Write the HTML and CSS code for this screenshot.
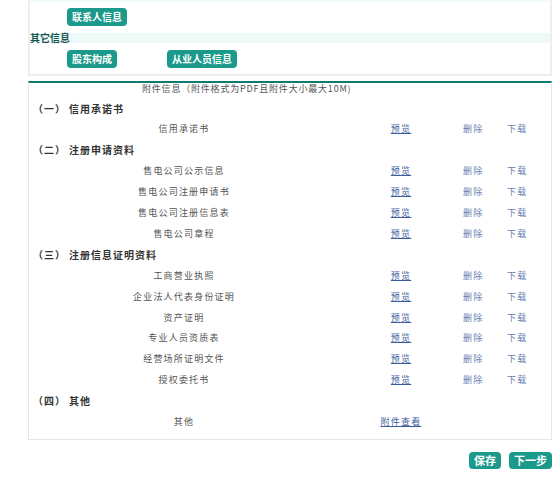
FILE: index.html
```html
<!DOCTYPE html>
<html lang="zh-CN">
<head>
  <meta charset="UTF-8">
  <title>附件信息</title>
  <link rel="stylesheet" href="styles.css">
</head>
<body>
  <div class="wrap">
    <section class="info-box">
      <div class="strip"></div>
      <div class="btn-row">
        <button type="button" class="btn">联系人信息</button>
      </div>
      <div class="box-title">其它信息</div>
      <div class="btn-row second">
        <button type="button" class="btn">股东构成</button>
        <button type="button" class="btn">从业人员信息</button>
      </div>
    </section>

    <section class="files">
      <div class="files-title">附件信息（附件格式为PDF且附件大小最大10M)</div>

      <div class="group">（一）<span>信用承诺书</span></div>
      <div class="file-row">
        <span class="name">信用承诺书</span>
        <a href="#" class="view">预览</a>
        <a href="#" class="op">删除</a>
        <a href="#" class="op">下载</a>
      </div>

      <div class="group">（二）<span>注册申请资料</span></div>
      <div class="file-row">
        <span class="name">售电公司公示信息</span>
        <a href="#" class="view">预览</a>
        <a href="#" class="op">删除</a>
        <a href="#" class="op">下载</a>
      </div>
      <div class="file-row">
        <span class="name">售电公司注册申请书</span>
        <a href="#" class="view">预览</a>
        <a href="#" class="op">删除</a>
        <a href="#" class="op">下载</a>
      </div>
      <div class="file-row">
        <span class="name">售电公司注册信息表</span>
        <a href="#" class="view">预览</a>
        <a href="#" class="op">删除</a>
        <a href="#" class="op">下载</a>
      </div>
      <div class="file-row">
        <span class="name">售电公司章程</span>
        <a href="#" class="view">预览</a>
        <a href="#" class="op">删除</a>
        <a href="#" class="op">下载</a>
      </div>

      <div class="group">（三）<span>注册信息证明资料</span></div>
      <div class="file-row">
        <span class="name">工商营业执照</span>
        <a href="#" class="view">预览</a>
        <a href="#" class="op">删除</a>
        <a href="#" class="op">下载</a>
      </div>
      <div class="file-row">
        <span class="name">企业法人代表身份证明</span>
        <a href="#" class="view">预览</a>
        <a href="#" class="op">删除</a>
        <a href="#" class="op">下载</a>
      </div>
      <div class="file-row">
        <span class="name">资产证明</span>
        <a href="#" class="view">预览</a>
        <a href="#" class="op">删除</a>
        <a href="#" class="op">下载</a>
      </div>
      <div class="file-row">
        <span class="name">专业人员资质表</span>
        <a href="#" class="view">预览</a>
        <a href="#" class="op">删除</a>
        <a href="#" class="op">下载</a>
      </div>
      <div class="file-row">
        <span class="name">经营场所证明文件</span>
        <a href="#" class="view">预览</a>
        <a href="#" class="op">删除</a>
        <a href="#" class="op">下载</a>
      </div>
      <div class="file-row">
        <span class="name">授权委托书</span>
        <a href="#" class="view">预览</a>
        <a href="#" class="op">删除</a>
        <a href="#" class="op">下载</a>
      </div>

      <div class="group">（四）<span>其他</span></div>
      <div class="file-row">
        <span class="name">其他</span>
        <a href="#" class="view">附件查看</a>
      </div>
    </section>

    <div class="actions">
      <button type="button" class="btn big">保存</button>
      <button type="button" class="btn big">下一步</button>
    </div>
  </div>
</body>
</html>
```

FILE: styles.css
```css
* {
  box-sizing: border-box;
}

body {
  margin: 0;
  background-color: #fff;
  font-family: "Noto Sans CJK SC", "Liberation Sans", sans-serif;
  color: #555;
}

.wrap {
  width: 524px;
  margin-left: 28px;
}

/* 上方信息块 */
.info-box {
  border: 2px solid #eee;
  border-top: none;
}
.strip {
  height: 2px;
  background-color: #f0faf9;
}
.btn-row {
  display: flex;
  gap: 50px;
  padding: 6px 0 7px 37px;
}
.btn-row.second {
  padding: 7px 0 6px 37px;
}
.box-title {
  height: 10px;
  line-height: 10px;
  font-size: 10px;
  font-weight: bold;
  color: #17554f;
  background-color: #eefaf8;
}

.btn {
  border: none;
  background-color: #1b9a8b;
  color: #fff;
  border-radius: 4px;
  height: 18px;
  padding: 0 5px;
  font-family: inherit;
  font-size: 10px;
  font-weight: bold;
  line-height: 18px;
  cursor: pointer;
}
.btn.big {
  height: 17px;
  line-height: 17px;
  font-size: 11px;
}

/* 附件列表 */
.files {
  margin-top: 5px;
  border: 1px solid #e6e6e6;
  border-top: 2px solid #0e7a70;
  padding-bottom: 6px;
}
.files-title {
  padding-left: 113px;
  height: 15.6px;
  line-height: 12px;
  font-size: 9px;
  letter-spacing: 0.8px;
  color: #555;
}
.group {
  height: 20.9px;
  line-height: 20.9px;
  padding-left: 4px;
  font-size: 10px;
  font-weight: bold;
  letter-spacing: 1px;
  color: #333;
}
.group span {
  margin-left: 3px;
}
.file-row {
  display: grid;
  grid-template-columns: 310px 124px 44px 44px;
  height: 20.9px;
  line-height: 20.9px;
  font-size: 9px;
  letter-spacing: 1.2px;
}
.name {
  text-align: center;
  color: #555;
}
.view {
  text-align: center;
  color: #3d5c9c;
  text-decoration: underline;
}
.op {
  color: #6a80b0;
  text-decoration: none;
}

.actions {
  display: flex;
  justify-content: flex-end;
  gap: 8px;
  margin-top: 12px;
}
```
